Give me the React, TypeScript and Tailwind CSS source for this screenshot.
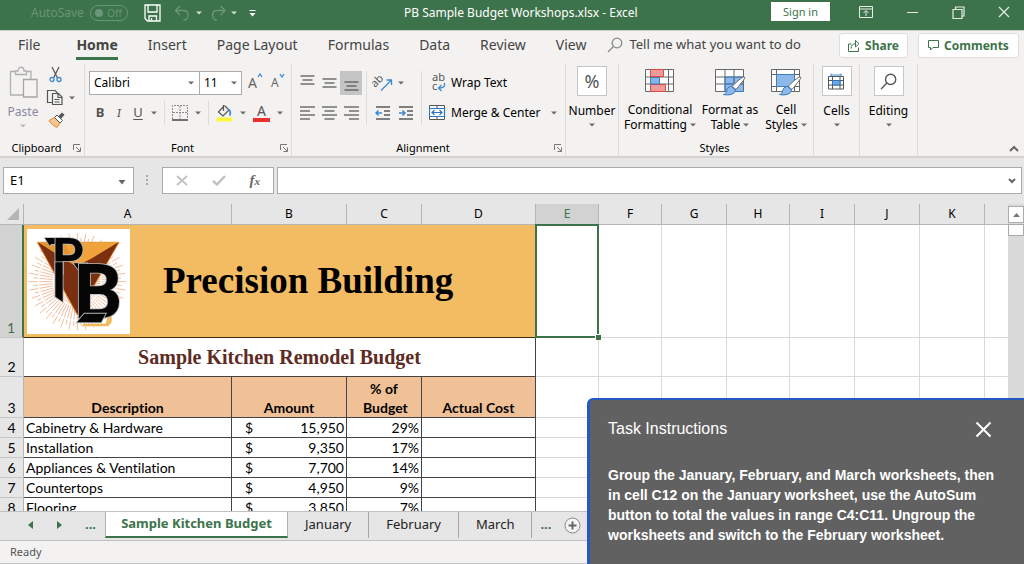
import React, { useState } from "react";
import clsx from "clsx";

const TABS = ["File", "Home", "Insert", "Page Layout", "Formulas", "Data", "Review", "View"];

const SHEETS = ["January", "February", "March"];

const COLUMNS = [
  { name: "A", width: "w-[208px]" },
  { name: "B", width: "w-[115px]" },
  { name: "C", width: "w-[75px]" },
  { name: "D", width: "w-[114px]" },
  { name: "E", width: "w-[63px]" },
  { name: "F", width: "w-[63px]" },
  { name: "G", width: "w-[65px]" },
  { name: "H", width: "w-[63px]" },
  { name: "I", width: "w-[65px]" },
  { name: "J", width: "w-[65px]" },
  { name: "K", width: "w-[65px]" },
  { name: "", width: "" },
];

const ITEMS = [
  { row: 4, description: "Cabinetry & Hardware", amount: "15,950", share: "29%" },
  { row: 5, description: "Installation", amount: "9,350", share: "17%" },
  { row: 6, description: "Appliances & Ventilation", amount: "7,700", share: "14%" },
  { row: 7, description: "Countertops", amount: "4,950", share: "9%" },
  { row: 8, description: "Flooring", amount: "3,850", share: "7%" },
];

function Caret({ className = "text-[#6b6b6b]" }: { className?: string }) {
  return (
    <svg width="6" height="4" viewBox="0 0 6 4" className={clsx("shrink-0", className)}>
      <path d="M0 0.5h6L3 3.5z" fill="currentColor" />
    </svg>
  );
}

function Launcher() {
  return (
    <button aria-label="More options" className="text-[#777]">
      <svg width="8" height="8" viewBox="0 0 8 8" fill="none" stroke="currentColor">
        <path d="M0.5 6V0.5H7M3 3l4 4M7.5 3.5v4h-4" />
      </svg>
    </button>
  );
}

function Group({
  label,
  className,
  launcher,
  children,
}: {
  label?: string;
  className: string;
  launcher?: boolean;
  children: React.ReactNode;
}) {
  return (
    <section className={clsx("flex flex-col shrink-0 mt-[2px] border-r border-[#dcdbda]", className)}>
      <div className="flex-1 min-h-0">{children}</div>
      {label && (
        <div className="flex items-center h-4 pr-[3px] text-[11px] leading-4 text-black">
          <span className="flex-1 text-center">{label}</span>
          {launcher && <Launcher />}
        </div>
      )}
    </section>
  );
}

function Lines({ widths, top = 2 }: { widths: number[]; top?: number }) {
  return (
    <svg width="15" height="16" viewBox="0 0 15 16" stroke="#5a5a5a" strokeWidth="1.3">
      {widths.map((w, i) => (
        <path key={i} d={`M${(15 - w) / 2} ${top + i * 4}h${w}`} />
      ))}
    </svg>
  );
}

function SideLines({ side }: { side: "left" | "right" }) {
  return (
    <svg width="15" height="16" viewBox="0 0 15 16" stroke="#5a5a5a" strokeWidth="1.3">
      {[15, 10, 15, 10].map((w, i) => (
        <path key={i} d={`M${side === "left" ? 0 : 15 - w} ${2 + i * 4}h${w}`} />
      ))}
    </svg>
  );
}

function Indent({ increase }: { increase?: boolean }) {
  return (
    <svg width="16" height="16" viewBox="0 0 16 16" fill="none" stroke="#5a5a5a" strokeWidth="1.3">
      <path d="M1 2h14M9 6h6M9 10h6M1 14h14" />
      <path
        d={increase ? "M1 8h6M4.500 5.500L7 8l-2.500 2.500" : "M7 8H1M3.500 5.500L1 8l2.500 2.500"}
        stroke="#3b8ad0"
        strokeWidth="1.5"
      />
    </svg>
  );
}

function TableIcon({ kind }: { kind: "conditional" | "table" | "cell" }) {
  return (
    <svg width="32" height="28" viewBox="0 0 32 28" fill="none">
      <path d="M1.500 1.500h28v22h-28z" fill="#fff" />
      {kind === "conditional" && (
        <>
          <path d="M1.500 9h28M1.500 16h28M6.500 1.500v22M24.500 1.500v22M1.500 1.500h28v22h-28z" stroke="#666" />
          <path d="M6.500 1.500h13v7h-13zM6.500 16.500h15v7h-15z" fill="#f19a9a" stroke="#dc4a44" />
          <path d="M6.500 9.500h9v6.500h-9z" fill="#86b4e6" stroke="#3e7fc4" />
        </>
      )}
      {kind === "table" && (
        <>
          <path d="M11 9h18.500v14.500H11z" fill="#8cb9ea" />
          <path d="M1.500 9h28M1.500 16h28M11 1.500v22M20 1.500v22M1.500 1.500h28v22h-28z" stroke="#666" />
          <path d="M11 9h18.500M11 16h18.500M11 9v14.500h18M20 9v14" stroke="#3e7fc4" />
        </>
      )}
      {kind === "cell" && (
        <>
          <path d="M1.500 6.500h28M1.500 18.500h28M6.500 1.500v22M24.500 1.500v22M1.500 1.500h28v22h-28z" stroke="#666" />
          <path d="M6.500 6.500h18v12h-18z" fill="#8cb9ea" stroke="#3e7fc4" />
        </>
      )}
      {kind !== "conditional" && (
        <>
          <path d="M30.500 9c1 1-1.500 4-8.500 12.500l-4-3C25 11.500 29.500 8 30.500 9z" fill="#fff" stroke="#666" />
          <path d="M17.500 18.500l4 3.200c0 4.500-6.500 6-12 4.800 3.500-.8 2.500-2.500 3.500-5 .8-2 2.800-3.200 4.500-3z" fill="#8cb9ea" stroke="#3375bd" />
        </>
      )}
    </svg>
  );
}

function Magnifier({ size, className }: { size: number; className?: string }) {
  return (
    <svg width={size} height={size} viewBox="0 0 16 16" fill="none" stroke="currentColor" strokeWidth="1.3" className={className}>
      <circle cx="10" cy="6" r="4.800" />
      <path d="M6.500 9.500L1 15" />
    </svg>
  );
}

// Starburst, inverted triangle and the two company initials
function Logo() {
  return (
    <svg viewBox="0 0 309 315" className="w-[103px] h-[105px] shrink-0 bg-white" role="img" aria-label="PB">
      <g stroke="#f0b08c" strokeWidth="2.500" strokeDasharray="70 4 40 5">
        {Array.from({ length: 72 }).map((_, i) => {
          const a = (i * Math.PI) / 36;
          const r = i % 2 ? 132 : 146;
          return <path key={i} d={`M151 158L${151 + r * Math.cos(a)} ${158 + r * Math.sin(a)}`} />;
        })}
      </g>
      <path d="M31 40h245L151 258z" fill="#792f10" stroke="#e58a35" strokeWidth="3" />
      <path d="M34 40h240l-83 50-44 22z" fill="#f0a33a" />
      <path d="M34 40l70 44 44 28-36-72z" fill="#e39530" />
      <path d="M245 252h9v28l-10 12h-80l6-8h66z" fill="#f3b95a" />
      <g fill="#050505" stroke="#b9b9b9" strokeWidth="5" paintOrder="stroke" fontFamily="Roboto, sans-serif" fontWeight="700">
        <path d="M54 27h52v18H72l-4 5z" />
        <text x="76" y="134" fontSize="150">
          P
        </text>
        <path d="M85 100h22v118L85 203z" />
        <path d="M140 103h40v17h-28z" />
        <text x="141" y="266" fontSize="228">
          B
        </text>
        <path d="M150 280l22-26h64l-14 26z" />
      </g>
    </svg>
  );
}

function TitleBar() {
  return (
    <header className="flex items-start h-[30px] shrink-0 bg-[#3d734b] text-white">
      <div className="flex items-center w-[404px] h-[26px] pl-[31px]">
        <label className="flex items-center gap-[6px] text-[12px] text-[#699677]">
          AutoSave
          <input type="checkbox" className="sr-only" />
          <span className="flex items-center justify-between w-[38px] h-4 pl-1 pr-[5px] rounded-full border border-[#699677] text-[10px]">
            <span className="size-2 rounded-full bg-[#699677]" />
            Off
          </span>
        </label>
        <button aria-label="Save" className="ml-4">
          <svg width="17" height="18" viewBox="0 0 17 18" fill="none" stroke="#fff" strokeWidth="1.300">
            <path d="M1 1h15v16H3.500L1 14.500zM4 1v7h9V1M5 17v-5h7.500v5M7.500 14v3" />
          </svg>
        </button>
        <button aria-label="Undo" className="flex items-center gap-[6px] ml-[13px]">
          <svg width="16" height="17" viewBox="0 0 16 17" fill="none" stroke="#699677" strokeWidth="1.400">
            <path d="M6 1L1.500 5.500 6 10M1.500 5.500H9c3 0 5 1.800 5 4.700S12 15 9.500 15" />
          </svg>
          <Caret className="text-[#d3e0d7]" />
        </button>
        <button aria-label="Redo" className="flex items-center gap-[4px] ml-[9px]">
          <svg width="16" height="17" viewBox="0 0 16 17" fill="none" stroke="#699677" strokeWidth="1.400">
            <path d="M9.500 1L14 5.500 9.500 10M14 5.500H6.500c-3 0-5 1.800-5 4.700S3.500 15 6 15" />
          </svg>
          <Caret className="text-[#d3e0d7]" />
        </button>
        <button aria-label="Customize toolbar" className="ml-3">
          <svg width="7" height="7" viewBox="0 0 7 7" fill="#fff">
            <path d="M0.500 0h6v1h-6zM0.500 3h6L3.500 6.500z" />
          </svg>
        </button>
      </div>
      <h1 className="text-[12px] leading-[26px] whitespace-nowrap">PB Sample Budget Workshops.xlsx - Excel</h1>
      <div className="flex items-center ml-auto h-6 pr-[14px] text-[#e3ece5]">
        <button className="w-[59px] h-[19px] mb-[2px] mr-[29px] bg-white text-[#3d734b] text-[11px] leading-[19px]">Sign in</button>
        <button aria-label="Ribbon display options" className="mr-[34px]">
          <svg width="14" height="12" viewBox="0 0 14 12" fill="none" stroke="currentColor">
            <path d="M0.500 0.500h13v11H0.500zM0.500 3h13M7 10V5M4.500 7L7 4.500 9.500 7" />
          </svg>
        </button>
        <button aria-label="Minimize" className="w-[11px] h-px mr-[34px] bg-[#e3ece5]" />
        <button aria-label="Restore" className="mr-[33px]">
          <svg width="13" height="13" viewBox="0 0 13 13" fill="none" stroke="currentColor" strokeWidth="1.200">
            <path d="M1 3.500h9v9H1zM3.500 3.500V1H12v9h-2" />
          </svg>
        </button>
        <button aria-label="Close">
          <svg width="12" height="12" viewBox="0 0 12 12" stroke="currentColor" strokeWidth="1.200">
            <path d="M1 1l10 10M11 1L1 11" />
          </svg>
        </button>
      </div>
    </header>
  );
}

function TabRow() {
  const [active, setActive] = useState("Home");

  return (
    <nav className="flex items-start h-8 shrink-0 border-t border-[#c5d3c9] pr-[5px] text-[13px] text-[#444] whitespace-nowrap">
      <div className="flex gap-[30px] pl-[18px] text-[14px]">
        {TABS.map((tab) => (
          <button
            key={tab}
            onClick={() => setActive(tab)}
            className={clsx(
              "h-[29px] border-b-3 first:mr-[6px]",
              active === tab ? "border-[#3d734b] font-bold" : "border-transparent"
            )}
          >
            {tab}
          </button>
        ))}
      </div>
      <button className="flex items-center gap-[6px] h-[27px] ml-[21px]">
        <Magnifier size={16} className="text-[#8a8a8a]" />
        Tell me what you want to do
      </button>
      <div className="flex gap-[10px] ml-auto mt-[2px] text-[12px] font-bold text-[#3d734b]">
        <button className="flex items-center justify-center gap-[5px] w-[69px] h-[25px] bg-white border border-[#deddd9] rounded-[3px]">
          <svg width="12" height="12" viewBox="0 0 12 12" fill="none" stroke="currentColor">
            <path d="M3.500 4H0.500v7.500h10V7.500M3 8.500c.3-3 2-5 5-5M7.500 0.500L11 3.700 7.500 7V1z" />
          </svg>
          Share
        </button>
        <button className="flex items-center justify-center gap-[5px] w-[101px] h-[25px] bg-white border border-[#deddd9] rounded-[3px]">
          <svg width="11" height="11" viewBox="0 0 11 11" fill="none" stroke="currentColor">
            <path d="M0.500 0.500h10v7H5l-2.500 2.500V7.500h-2z" />
          </svg>
          Comments
        </button>
      </div>
    </nav>
  );
}

function ClipboardGroup() {
  return (
    <Group label="Clipboard" launcher className="w-[85px]">
      <div className="flex pt-[2px]">
        <button className="flex flex-col items-center w-[46px] text-[12px] leading-4 text-[#8b87a0]">
          <svg width="29" height="34" viewBox="0 0 29 34" fill="none" stroke="#b0b0b0" strokeWidth="1.300" className="mb-1">
            <path d="M1.500 5.500H22V29H1.500z" />
            <path d="M6.500 8.500V5H9c0-5 6-5 6 0h2.500v3.500z" fill="#f3f2f1" />
            <path d="M14.500 13.500h13.500v17.500H14.500z" fill="#f5f4f3" stroke="#a5a5a5" />
          </svg>
          Paste
          <span className="pt-1"><Caret className="text-[#bbb]" /></span>
        </button>
        <div className="flex flex-col gap-[6px]">
          <button aria-label="Cut" className="pl-[3px]">
            <svg width="13" height="17" viewBox="0 0 13 17" fill="none" strokeWidth="1.300">
              <path d="M3 1l5.500 11M10 1L4.500 12" stroke="#5a5a5a" />
              <circle cx="3" cy="13.500" r="2" stroke="#3b8ad0" />
              <circle cx="10" cy="13.500" r="2" stroke="#3b8ad0" />
            </svg>
          </button>
          <button aria-label="Copy" className="flex items-center gap-[6px]">
            <svg width="17" height="17" viewBox="0 0 17 17" fill="none" stroke="#555" strokeWidth="1.200">
              <path d="M7 13.500H1.500V1.500H9l2.500 2.500" />
              <path d="M6.500 4.500h6l3.500 3.500v7.500H6.500zM12 4.500v4h4M8.500 10.500h5M8.500 13h5" fill="#f3f2f1" />
            </svg>
            <Caret />
          </button>
          <button aria-label="Format painter" className="pl-[2px]">
            <svg width="17" height="16" viewBox="0 0 17 16" fill="none">
              <path d="M1 8.500l5.500-3 5.500 5.500-3 4.500C6 14 3 12 1 8.500z" fill="#f7c58c" stroke="#e08d3c" />
              <path d="M6.500 5.500L9 3l5.500 5.500L12 11z" fill="#fff" stroke="#555" />
              <path d="M10.500 4L14 0.500l2.500 2.200L13 6.800z" fill="#555" />
            </svg>
          </button>
        </div>
      </div>
    </Group>
  );
}

function FontGroup() {
  return (
    <Group label="Font" launcher className="w-[207px]">
      <div className="flex items-center pt-[7px] pl-1">
        <div className="relative flex items-center w-[111px] h-6">
          <select aria-label="Font" className="appearance-none w-full h-full pl-1 bg-white border border-[#ababab] text-[12px] text-black">
            <option>Calibri</option>
          </select>
          <span className="absolute right-[6px] pointer-events-none flex"><Caret /></span>
        </div>
        <div className="relative flex items-center w-[43px] h-6 -ml-px">
          <select aria-label="Font size" className="appearance-none w-full h-full pl-1 bg-white border border-[#ababab] text-[12px] text-black">
            <option>11</option>
          </select>
          <span className="absolute right-[5px] pointer-events-none flex"><Caret /></span>
        </div>
        <button aria-label="Increase font size" className="flex ml-[6px] text-[14px] leading-5 text-[#666]">
          A
          <svg width="6" height="5" viewBox="0 0 6 5" fill="none" stroke="#3b8ad0" strokeWidth="1.300"><path d="M1 4l2-3 2 3" /></svg>
        </button>
        <button aria-label="Decrease font size" className="flex ml-[8px] text-[12px] leading-5 text-[#666]">
          A
          <svg width="6" height="5" viewBox="0 0 6 5" fill="none" stroke="#3b8ad0" strokeWidth="1.300"><path d="M1 1l2 3 2-3" /></svg>
        </button>
      </div>
      <div className="flex items-center justify-between h-6 mt-[6px] pl-[9px] pr-[8px] text-[13px] text-[#555]">
        <button className="w-3 font-bold">B</button>
        <button className="w-3 font-serif italic">I</button>
        <button className="w-3 underline underline-offset-2">U</button>
        <button aria-label="Underline styles"><Caret /></button>
        <span className="w-px h-6 bg-[#dcdbda]" />
        <button aria-label="Borders">
          <svg width="16" height="16" viewBox="0 0 16 16" fill="none" stroke="#8a8a8a">
            <path d="M0.500 14V0.500h15V14M8 1v13M1 7.500h14" strokeDasharray="2 1" />
            <path d="M0 15h16" stroke="#444" strokeWidth="1.500" />
          </svg>
        </button>
        <button aria-label="Border styles"><Caret /></button>
        <span className="w-px h-6 bg-[#dcdbda]" />
        <button aria-label="Fill color">
          <svg width="17" height="18" viewBox="0 0 17 18" fill="none" stroke="#555" strokeWidth="1.200">
            <path d="M7.500 2.500L2.500 8l4.500 4 6-6-4.500-4.500" />
            <path d="M7.500 1v6" />
            <path d="M12.500 5.500c2.500 1 2 3.500 1.500 6" stroke="#3b8ad0" strokeWidth="1.800" />
            <path d="M0.500 15.500h16" stroke="#fdf93c" strokeWidth="4" />
          </svg>
        </button>
        <button aria-label="Fill colors"><Caret /></button>
        <button aria-label="Font color" className="flex flex-col items-center w-[17px] text-[14px] leading-[14px]">
          A
          <span className="w-full h-[4px] bg-[#e8312a]" />
        </button>
        <button aria-label="Font colors"><Caret /></button>
      </div>
    </Group>
  );
}

function AlignmentGroup() {
  return (
    <Group label="Alignment" launcher className="w-[274px]">
      <div className="flex pt-[7px] pl-1 text-[12px] text-black">
        <div className="grid grid-cols-[22px_22px_22px] auto-rows-[24px] gap-y-[6px] pr-1 place-items-center border-r border-[#dcdbda]">
          <button aria-label="Top align"><Lines widths={[14, 10, 14]} top={1} /></button>
          <button aria-label="Middle align"><Lines widths={[14, 10, 14]} top={4} /></button>
          <button aria-label="Bottom align" className="flex items-center justify-center size-full bg-[#c5c5c5]">
            <Lines widths={[14, 10, 14]} top={7} />
          </button>
          <button aria-label="Align left"><SideLines side="left" /></button>
          <button aria-label="Center"><Lines widths={[15, 10, 15, 10]} /></button>
          <button aria-label="Align right"><SideLines side="right" /></button>
        </div>
        <div className="grid grid-cols-[23px_23px] auto-rows-[24px] gap-y-[6px] pl-1 pr-1 place-items-center border-r border-[#dcdbda]">
          <button aria-label="Orientation">
            <svg width="18" height="17" viewBox="0 0 18 17" fill="none" stroke="#555" className="overflow-visible">
              <text x="0" y="11" fontSize="11" fill="#555" stroke="none" transform="rotate(-45 3 11)">ab</text>
              <path d="M7 15.500L17 5.500M12.500 5h5v5" stroke="#3b8ad0" strokeWidth="1.300" />
            </svg>
          </button>
          <button aria-label="Orientation options" className="flex items-center w-full pl-1"><Caret /></button>
          <button aria-label="Decrease indent"><Indent /></button>
          <button aria-label="Increase indent"><Indent increase /></button>
        </div>
        <div className="flex flex-col flex-1 gap-[6px] pl-[7px] pr-2">
          <button className="flex items-center gap-[5px] h-6">
            <svg width="17" height="18" viewBox="0 0 17 18" fill="none" className="overflow-visible">
              <text x="3" y="7" fontSize="11" fill="#555">ab</text>
              <text x="3" y="16" fontSize="11" fill="#555">c</text>
              <path d="M15.500 9v2c0 2-2 3-5.500 3M12.500 11l-3 3 3 3" stroke="#3b8ad0" strokeWidth="1.300" />
            </svg>
            Wrap Text
          </button>
          <button className="flex items-center gap-[5px] h-6 whitespace-nowrap">
            <svg width="17" height="16" viewBox="0 0 17 16" fill="none" stroke="#555">
              <path d="M0.500 0.500h15v14h-15zM8 0.500V4M8 11v3.500" fill="#fff" />
              <path d="M0.500 3.500h15v8h-15zM3 7.500h10M5.500 5L3 7.500 5.500 10M10.500 5L13 7.500 10.500 10" stroke="#2f74c0" strokeWidth="1.200" />
            </svg>
            <span className="flex-1 text-left">Merge &amp; Center</span>
            <Caret />
          </button>
        </div>
      </div>
    </Group>
  );
}

function BoxedButton({ label, children }: { label: string; children: React.ReactNode }) {
  return (
    <button className="flex flex-col items-center w-full pt-[2px] text-[12px] leading-4 text-black">
      <span className="flex items-center justify-center size-[30px] mb-[7px] bg-white border border-[#c6c6c6]">{children}</span>
      {label}
      <span className="pt-1"><Caret /></span>
    </button>
  );
}

function StyleButton({
  kind,
  first,
  second,
  className,
}: {
  kind: "conditional" | "table" | "cell";
  first: string;
  second: string;
  className: string;
}) {
  return (
    <button className={clsx("flex flex-col items-center shrink-0 pt-[4px] whitespace-nowrap", className)}>
      <TableIcon kind={kind} />
      <span className="mt-[6px]">{first}</span>
      <span className="flex items-center gap-[3px]">
        {second}
        <Caret />
      </span>
    </button>
  );
}

function Ribbon() {
  return (
    <div className="flex h-24 shrink-0 border-b-2 border-[#d4d3d2]">
      <ClipboardGroup />
      <FontGroup />
      <AlignmentGroup />
      <Group className="w-[53px]">
        <BoxedButton label="Number">
          <span className="text-[18px] text-[#555]">%</span>
        </BoxedButton>
      </Group>
      <Group label="Styles" className="w-[195px]">
        <div className="flex pl-[2px] text-[12px] leading-[15px] text-black">
          <StyleButton kind="conditional" first="Conditional" second="Formatting" className="w-[78px]" />
          <StyleButton kind="table" first="Format as" second="Table" className="w-[62px]" />
          <StyleButton kind="cell" first="Cell" second="Styles" className="w-[50px]" />
        </div>
      </Group>
      <Group className="w-[46px]">
        <BoxedButton label="Cells">
          <svg width="17" height="17" viewBox="0 0 17 17" fill="none" stroke="#555">
            <path d="M0.500 3.500h15v12.500h-15zM0.500 7.500h15M0.500 12h15M4.500 3.500V16M12 3.500V16" />
            <path d="M4.500 7.500H12V12H4.500z" fill="#6ea6e0" stroke="#2f74c0" />
            <path d="M3 2h10M3 0.500v3M13 0.500v3" stroke="#3b8ad0" />
          </svg>
        </BoxedButton>
      </Group>
      <Group className="w-[58px]">
        <BoxedButton label="Editing">
          <Magnifier size={17} className="text-[#555]" />
        </BoxedButton>
      </Group>
      <button aria-label="Collapse ribbon" className="self-end ml-auto mr-[5px] mb-[4px]">
        <svg width="10" height="7" viewBox="0 0 10 7" fill="none" stroke="#666" strokeWidth="2">
          <path d="M1 6l4-4 4 4" />
        </svg>
      </button>
    </div>
  );
}

function FormulaBar() {
  return (
    <div className="flex shrink-0 h-[46px] pt-[9px] pl-[3px] pr-[2px] bg-[#e6e6e6]">
      <div className="flex items-center w-[131px] h-[27px] bg-white border border-[#ababab]">
        <input aria-label="Name box" defaultValue="E1" className="flex-1 min-w-0 pl-[6px] text-[13px] text-black outline-none" />
        <button aria-label="Named ranges" className="px-[7px] pt-1">
          <svg width="8" height="5" viewBox="0 0 8 5"><path d="M0.500 0h7L4 4.500z" fill="#666" /></svg>
        </button>
      </div>
      <svg width="28" height="27" viewBox="0 0 28 27" fill="#aaa">
        <path d="M12 8h2v2h-2zM12 12h2v2h-2zM12 16h2v2h-2z" />
      </svg>
      <div className="flex items-center justify-between w-[112px] h-[27px] px-[13px] bg-white border border-[#ababab]">
        <button aria-label="Cancel">
          <svg width="12" height="11" viewBox="0 0 12 11" stroke="#c2c2c2" strokeWidth="1.800"><path d="M1 1l10 9M11 1L1 10" /></svg>
        </button>
        <button aria-label="Enter">
          <svg width="14" height="11" viewBox="0 0 14 11" fill="none" stroke="#c2c2c2" strokeWidth="2.500"><path d="M1 6l4 3.500L13 1" /></svg>
        </button>
        <button aria-label="Insert function" className="font-['Liberation_Serif',serif] font-bold italic text-[15px] leading-4 text-[#6a6a6a]">
          f<span className="text-[11px]">x</span>
        </button>
      </div>
      <div className="flex items-center flex-1 h-[27px] ml-[3px] bg-white border border-[#ababab]">
        <input aria-label="Formula" className="flex-1 min-w-0 px-2 text-[13px] outline-none" />
        <button aria-label="Expand formula bar" className="px-[5px]">
          <svg width="8" height="6" viewBox="0 0 8 6" fill="none" stroke="#666" strokeWidth="2"><path d="M1 1l3 3 3-3" /></svg>
        </button>
      </div>
    </div>
  );
}

function RowHeader({ row, selected }: { row: number; selected?: boolean }) {
  return (
    <th
      scope="row"
      className={clsx(
        "p-0 align-bottom font-normal border-b border-b-[#c6c6c6]",
        selected
          ? "bg-[#d2d2d2] text-[#3d734b] border-r-2 border-r-[#3d734b]"
          : "bg-[#e6e6e6] border-r border-r-[#b5b5b5]"
      )}
    >
      {row}
    </th>
  );
}

// Unfilled cells to the right of the budget
function EmptyCells({ from = 4 }: { from?: number }) {
  return (
    <>
      {COLUMNS.slice(from).map((col, i) => (
        <td key={i} className={clsx("p-0 border-b border-[#d9d9d9]", col.name && "border-r")} />
      ))}
    </>
  );
}

function Sheet() {
  return (
    <div className="flex flex-1 min-h-0 overflow-hidden bg-white">
      <div className="flex-1 min-w-0 overflow-hidden">
        <table className="table-fixed w-full border-separate border-spacing-0 font-[Lato,sans-serif] [font-variant-ligatures:none] text-[14px] leading-[19px] text-black">
          <colgroup>
            <col className="w-6" />
            {COLUMNS.map((col, i) => (
              <col key={i} className={col.width} />
            ))}
          </colgroup>
          <thead>
            <tr className="h-[21px] bg-[#e6e6e6]">
              <td className="p-0 border-r border-b border-[#b5b5b5]">
                <svg width="12" height="12" viewBox="0 0 12 12" className="ml-[7px]">
                  <path d="M12 0v12H0z" fill="#b4b4b4" />
                </svg>
              </td>
              {COLUMNS.map((col, i) => (
                <th
                  key={i}
                  scope="col"
                  className={clsx(
                    "p-0 border-b border-[#b5b5b5] font-normal text-[12px] leading-5 font-['Noto_Sans',sans-serif]",
                    col.name && "border-r",
                    col.name === "E" && "bg-[#d2d2d2] text-[#3d734b]"
                  )}
                >
                  {col.name}
                </th>
              ))}
            </tr>
          </thead>
          <tbody>
            <tr className="h-[113px]">
              <RowHeader row={1} selected />
              <td colSpan={4} className="p-0 bg-[#f4bc62] border-b border-[#3a2a10]">
                <div className="flex items-center gap-[33px] pl-[3px]">
                  <Logo />
                  <span className="font-['Liberation_Serif',serif] font-bold text-[37px] leading-10">Precision Building</span>
                </div>
              </td>
              <td className="relative p-0 border-r border-b border-[#d9d9d9]">
                <span className="absolute -inset-px border-2 border-[#3d734b]" />
                <span className="absolute -right-[3px] -bottom-[3px] size-[6px] bg-[#3d734b] border-t border-l border-white" />
              </td>
              <EmptyCells from={5} />
            </tr>
            <tr className="h-[39px]">
              <RowHeader row={2} />
              <td
                colSpan={4}
                className="p-0 border-r border-b border-[#444] text-center font-['Liberation_Serif',serif] font-bold text-[20px] text-[#5e2b22]"
              >
                Sample Kitchen Remodel Budget
              </td>
              <EmptyCells />
            </tr>
            <tr className="h-[41px]">
              <RowHeader row={3} />
              {["Description", "Amount", "% of Budget", "Actual Cost"].map((title) => (
                <td
                  key={title}
                  className="p-0 px-4 bg-[#f0c196] border-r border-b border-[#444] text-center align-bottom font-bold"
                >
                  {title}
                </td>
              ))}
              <EmptyCells />
            </tr>
            {ITEMS.map((item) => (
              <tr key={item.row} className="h-5">
                <RowHeader row={item.row} />
                <td className="p-0 pl-[2px] border-r border-b border-[#444]">{item.description}</td>
                <td className="p-0 border-r border-b border-[#444]">
                  <div className="flex justify-between pl-[13px] pr-[2px]">
                    <span>$</span>
                    <span>{item.amount}</span>
                  </div>
                </td>
                <td className="p-0 pr-[2px] border-r border-b border-[#444] text-right">{item.share}</td>
                <td className="p-0 border-r border-b border-[#444]" />
                <EmptyCells />
              </tr>
            ))}
          </tbody>
        </table>
      </div>
      <div className="flex flex-col w-4 shrink-0 pt-[2px] bg-[#dadada]">
        <button aria-label="Scroll up" className="flex items-center justify-center h-[17px] bg-white border border-[#ababab]">
          <svg width="7" height="4" viewBox="0 0 7 4"><path d="M0 4h7L3.500 0z" fill="#777" /></svg>
        </button>
        <div className="h-3 mt-px bg-white border border-[#ababab]" />
      </div>
    </div>
  );
}

function SheetTabs() {
  return (
    <div className="flex items-start shrink-0 h-[30px] bg-[#e6e6e6] border-t border-b border-[#c0c0c0] text-[13px] text-[#222]">
      <div className="flex items-center justify-between w-[105px] h-[26px] pl-[28px] pr-[9px] text-[#3d734b]">
        <button aria-label="Previous sheet">
          <svg width="5" height="8" viewBox="0 0 5 8"><path d="M5 0v8L0 4z" fill="currentColor" /></svg>
        </button>
        <button aria-label="Next sheet">
          <svg width="5" height="8" viewBox="0 0 5 8"><path d="M0 0v8l5-4z" fill="currentColor" /></svg>
        </button>
        <button className="font-bold">...</button>
      </div>
      <button className="w-[183px] h-[26px] shrink-0 bg-white border-x border-b-2 border-x-[#b0b0b0] border-b-[#3d734b] font-bold text-[#3d734b] whitespace-nowrap">
        Sample Kitchen Budget
      </button>
      {SHEETS.map((name) => (
        <button key={name} className="h-[26px] px-[17px] border-r border-[#a8a8a8]">
          {name}
        </button>
      ))}
      <button className="h-[26px] px-2 font-bold text-[#3d734b]">...</button>
      <button aria-label="New sheet" className="ml-[5px] mt-[5px]">
        <svg width="17" height="17" viewBox="0 0 17 17" fill="none" stroke="#888">
          <circle cx="8.500" cy="8.500" r="7.500" fill="#f4f4f4" />
          <path d="M8.500 4.500v8M4.500 8.500h8" stroke="#666" strokeWidth="2" />
        </svg>
      </button>
    </div>
  );
}

function TaskInstructions() {
  const [open, setOpen] = useState(true);
  if (!open) return null;

  return (
    <aside className="absolute right-0 bottom-0 w-[437px] h-[166px] pl-[18px] pr-[20px] pt-[15px] bg-[#616161] border-t-2 border-l-3 border-[#2459c4] rounded-tl-md text-white font-['Liberation_Sans',sans-serif]">
      <div className="flex items-center justify-between h-7 pr-[12px]">
        <h2 className="text-[16px]">Task Instructions</h2>
        <button aria-label="Close" onClick={() => setOpen(false)}>
          <svg width="17" height="17" viewBox="0 0 17 17" stroke="currentColor" strokeWidth="2">
            <path d="M1.500 1.500l14 14M15.500 1.500l-14 14" />
          </svg>
        </button>
      </div>
      <p className="mt-[22px] text-[14px] leading-5 font-bold">
        Group the January, February, and March worksheets, then in cell C12 on the January worksheet, use the AutoSum
        button to total the values in range C4:C11. Ungroup the worksheets and switch to the February worksheet.
      </p>
    </aside>
  );
}

export default function App() {
  return (
    <div className="relative flex flex-col h-screen min-w-[1024px] overflow-hidden bg-[#f3f2f1] font-['Noto_Sans',sans-serif]">
      <TitleBar />
      <TabRow />
      <Ribbon />
      <FormulaBar />
      <Sheet />
      <SheetTabs />
      <footer className="flex items-center h-[23px] shrink-0 px-[10px] border-b border-[#c6c6c6] text-[11px] text-[#555]">Ready</footer>
      <TaskInstructions />
    </div>
  );
}
